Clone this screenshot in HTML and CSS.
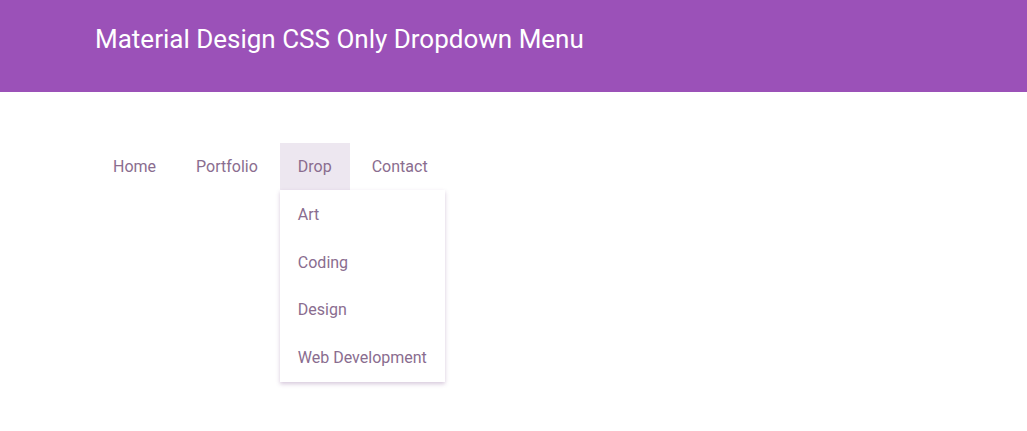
FILE: index.html
```html
<!DOCTYPE html>
<html>
<head>
<meta charset="utf-8">
<link rel="stylesheet" href="styles.css">
</head>
<body>
<header class="topbar">
  <h1 class="title">Material Design CSS Only Dropdown Menu</h1>
</header>
<nav class="menu">
  <ul class="menu-list">
    <li class="menu-item"><a class="menu-link">Home</a></li>
    <li class="menu-item"><a class="menu-link">Portfolio</a></li>
    <li class="menu-item is-open"><a class="menu-link">Drop</a>
      <ul class="dropdown">
        <li><a class="dropdown-link">Art</a></li>
        <li><a class="dropdown-link">Coding</a></li>
        <li><a class="dropdown-link">Design</a></li>
        <li><a class="dropdown-link">Web Development</a></li>
      </ul>
    </li>
    <li class="menu-item"><a class="menu-link">Contact</a></li>
  </ul>
</nav>
</body>
</html>
```
FILE: styles.css
```css
* { box-sizing: border-box; }
html, body { min-height: 100%; }
body {
  margin: 0;
  min-height: 431px;
  font-family: Roboto, "Liberation Sans", sans-serif;
  background: #fff;
}
.topbar {
  background: #9b51b8;
  height: 92px;
  padding: 26px 95px 0;
}
.title {
  margin: 0;
  color: #fff;
  font-size: 26px;
  font-weight: 400;
  line-height: 26px;
}
.menu {
  padding: 51px 95px 0;
}
.menu-list {
  list-style: none;
  margin: 0;
  padding: 0;
  display: flex;
  gap: 4px;
}
.menu-item {
  position: relative;
}
.menu-link {
  display: block;
  padding: 0 18px;
  line-height: 47px;
  font-size: 16px;
  color: #8a6d8f;
}
.is-open > .menu-link {
  background: #ede7f0;
}
.dropdown {
  position: absolute;
  z-index: 2;
  top: 47px;
  left: 0;
  list-style: none;
  margin: 0;
  padding: 1px 0;
  width: 165px;
  background: #fff;
  box-shadow: 0 2px 4px rgba(110, 60, 130, 0.28);
}
.dropdown-link {
  display: block;
  padding: 0 18px;
  line-height: 47.5px;
  font-size: 16px;
  color: #8a6d8f;
  white-space: nowrap;
}
```
